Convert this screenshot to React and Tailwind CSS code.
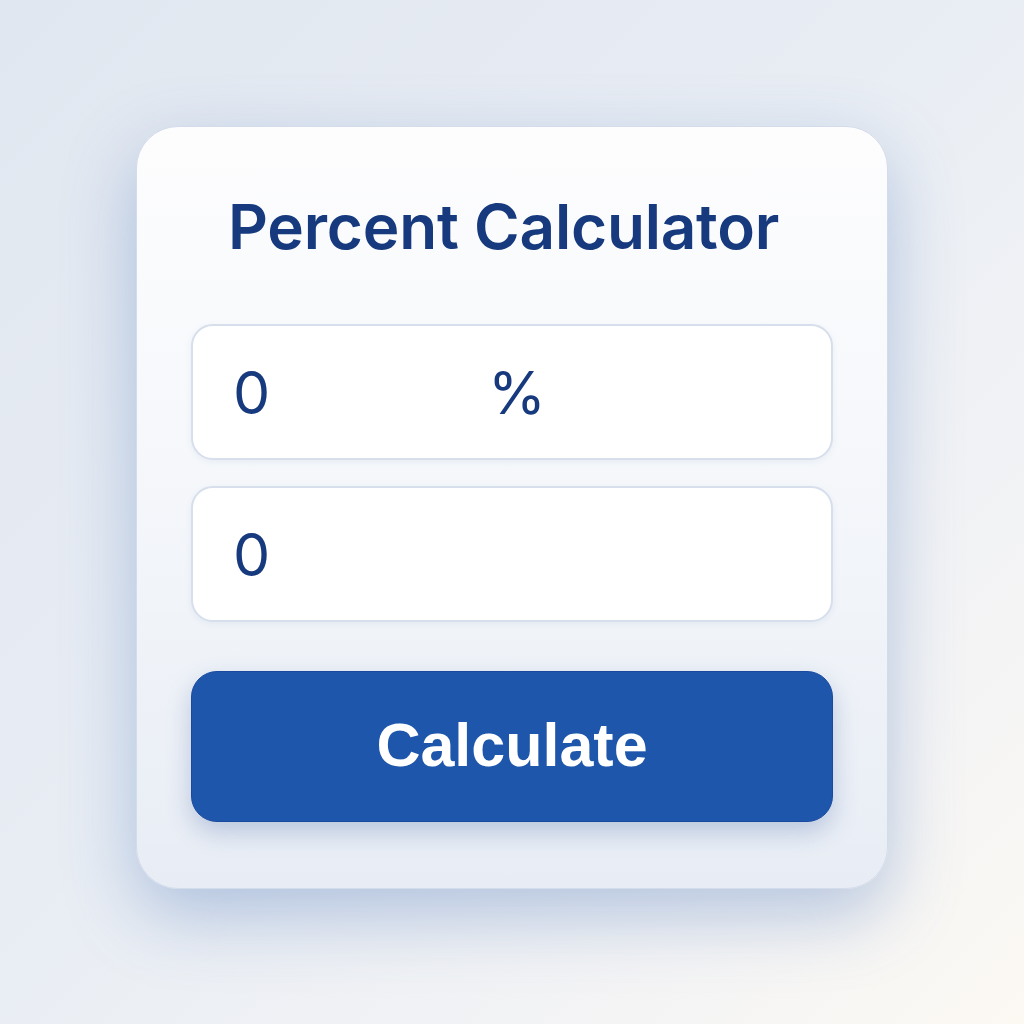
export default function App() {
  return (
    <div className="min-h-screen w-full bg-[linear-gradient(135deg,#e1e7f0_0%,#e8edf4_45%,#f4f4f5_80%,#fcf9f3_100%)] flex items-start justify-center pt-[126px]">
      {/* card */}
      <div className="w-[752px] h-[763px] rounded-[42px] bg-[linear-gradient(180deg,#fdfdfe_0%,#f6f8fb_40%,#e8edf5_100%)] border border-[#d3dcea] shadow-[0_26px_70px_rgba(60,105,180,0.34)] px-[54px] pt-[69px] flex flex-col font-['Inter',sans-serif]">
        <h1 className="pl-[37px] text-[62px] leading-none font-semibold text-[#163a7d] tracking-[-0.2px]">
          Percent Calculator
        </h1>

        <div className="mt-[66px] flex flex-col gap-[26px]">
          <div className="h-[136px] rounded-[22px] bg-white border-2 border-[#d6dfeb] shadow-[0_2px_6px_rgba(80,110,160,0.08)] flex items-center pl-[40px]">
            <span className="w-[255px] text-[59px] leading-none text-[#173a7e]">0</span>
            <span className="text-[59px] leading-none text-[#173a7e]">%</span>
          </div>
          <div className="h-[136px] rounded-[22px] bg-white border-2 border-[#d6dfeb] shadow-[0_2px_6px_rgba(80,110,160,0.08)] flex items-center pl-[40px]">
            <span className="text-[59px] leading-none text-[#173a7e]">0</span>
          </div>
        </div>

        <button className="mt-[49px] h-[151px] w-full rounded-[26px] bg-[#1e56ab] border border-[#1a4aa0] shadow-[0_10px_24px_rgba(40,80,150,0.25)] text-white text-[61px] font-bold font-['Liberation_Sans',sans-serif] leading-none pb-[2px]">
          Calculate
        </button>
      </div>
    </div>
  );
}
